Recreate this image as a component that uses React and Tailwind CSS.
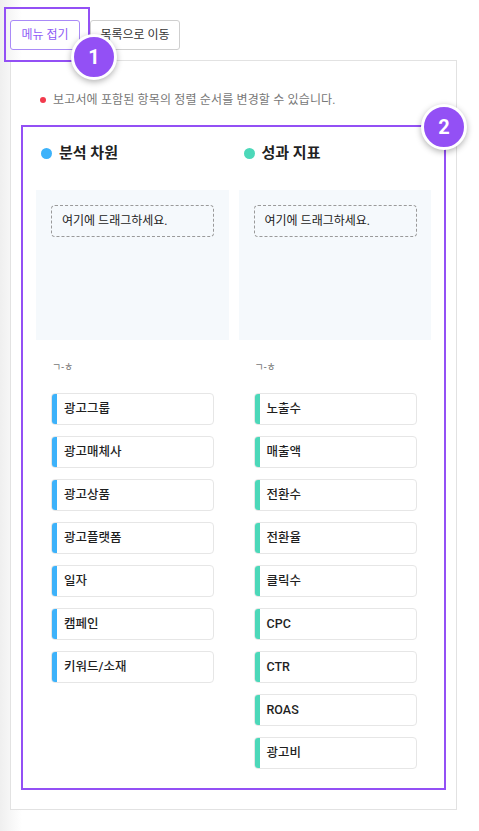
import React from "react";

const dims = ["광고그룹", "광고매체사", "광고상품", "광고플랫폼", "일자", "캠페인", "키워드/소재"];
const metrics = ["노출수", "매출액", "전환수", "전환율", "클릭수", "CPC", "CTR", "ROAS", "광고비"];

function Column({ title, dot, bar, items }) {
  return (
    <div className="flex flex-col">
      <div className="flex items-center h-[20px] pl-[5px]">
        <span className={`w-[11px] h-[11px] rounded-full ${dot}`} />
        <span className="ml-[7px] text-[15px] font-bold text-[#222] leading-[20px]">{title}</span>
      </div>
      <div className="mt-[27px] h-[150px] bg-[#f5f9fc] pt-[15px] pl-[15px]">
        <div className="w-[163px] h-[32px] border border-dashed border-[#9a9a9a] rounded-[4px] flex items-center pl-[10px] text-[12px] text-[#222] bg-transparent">
          여기에 드래그하세요.
        </div>
      </div>
      <div className="mt-[21px] pl-[16px] h-[14px] text-[10px] leading-[14px] text-[#777]">ㄱ-ㅎ</div>
      <div className="mt-[18px] pl-[15px] flex flex-col gap-[11px]">
        {items.map((t) => (
          <div key={t} className="w-[163px] h-[32px] flex rounded-[4px] border border-[#e6e6e6] bg-white overflow-hidden">
            <div className={`w-[5px] h-full ${bar}`} />
            <div className="flex items-center pl-[7px] text-[12.5px] font-medium text-[#1f1f1f]">{t}</div>
          </div>
        ))}
      </div>
    </div>
  );
}

export default function App() {
  return (
    <div
      className="relative w-[479px] h-[831px] bg-white overflow-hidden"
      style={{ fontFamily: 'Roboto, "Noto Sans CJK KR", sans-serif' }}
    >
      <div className="absolute left-0 top-0 w-[22px] h-full bg-gradient-to-r from-[#efefef] to-white" />
      <div className="relative pt-[20px] px-[10px]">
        <div className="flex gap-[10px] h-[30px]">
          <button className="w-[70px] h-[30px] border border-[#a98af7] rounded-[3px] text-[12px] text-[#8f5cf6] bg-white">
            메뉴 접기
          </button>
          <button className="w-[90px] h-[30px] border border-[#cfcfcf] rounded-[3px] text-[12px] text-[#333] bg-white">
            목록으로 이동
          </button>
        </div>
        <div className="mt-[10px] w-[447px] h-[750px] border border-[#e2e2e2] bg-white">
          <div className="pt-[30px] pl-[29px] flex items-center h-[48px] pb-0">
            <span className="w-[6px] h-[6px] rounded-full bg-[#f23a4c]" />
            <span className="ml-[7px] text-[12px] tracking-[0.15px] text-[#777] leading-[18px]">
              보고서에 포함된 항목의 정렬 순서를 변경할 수 있습니다.
            </span>
          </div>
          <div className="mt-[16px] mx-[10px] h-[665px] border-2 border-[#9350f5] pt-[16px] px-[13px]">
            <div className="grid grid-cols-2 gap-[10px]">
              <Column title="분석 차원" dot="bg-[#3db2fa]" bar="bg-[#3db2fa]" items={dims} />
              <Column title="성과 지표" dot="bg-[#4cd8b9]" bar="bg-[#4cd8b9]" items={metrics} />
            </div>
          </div>
        </div>
      </div>

      <div className="absolute left-[4px] top-[7px] w-[86px] h-[55px] border-2 border-[#9350f5]" />
      <div className="absolute left-[71px] top-[34px] w-[46px] h-[46px] rounded-full bg-[#9350f5] border-[3px] border-white shadow-[0_2px_6px_rgba(0,0,0,0.3)] flex items-center justify-center text-white text-[20px] font-bold">
        1
      </div>
      <div className="absolute left-[421px] top-[104px] w-[46px] h-[46px] rounded-full bg-[#9350f5] border-[3px] border-white shadow-[0_2px_6px_rgba(0,0,0,0.3)] flex items-center justify-center text-white text-[20px] font-bold">
        2
      </div>
    </div>
  );
}
